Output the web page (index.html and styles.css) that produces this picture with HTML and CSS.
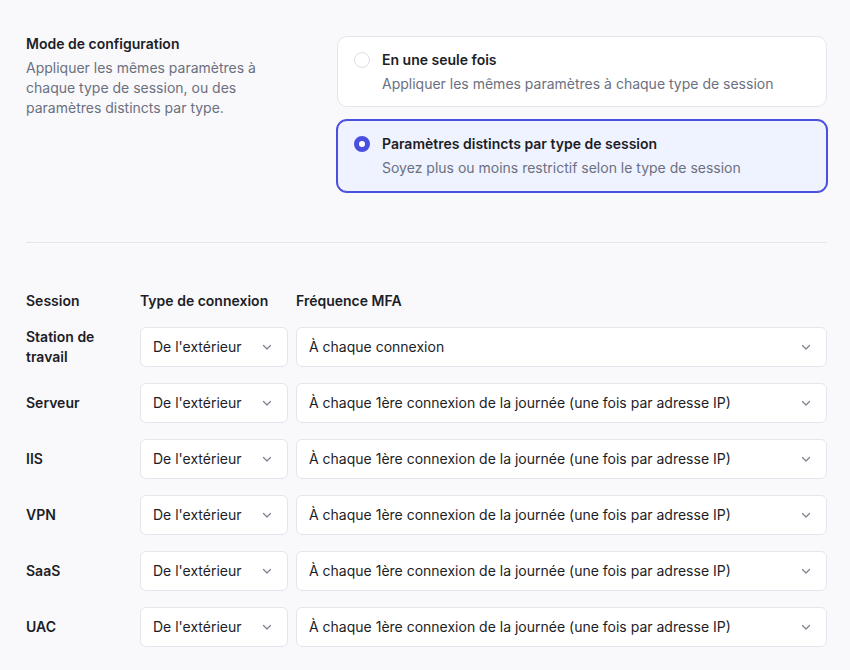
FILE: index.html
```html
<!DOCTYPE html>
<html lang="fr">
<head>
<meta charset="utf-8">
<link rel="stylesheet" href="styles.css">
</head>
<body>
<div class="page">
  <section class="mode">
    <div class="mode-info">
      <div class="mode-title">Mode de configuration</div>
      <p class="mode-desc">Appliquer les mêmes paramètres à chaque type de session, ou des paramètres distincts par type.</p>
    </div>
    <div class="options">
      <label class="option">
        <span class="radio"></span>
        <span class="option-text">
          <span class="option-title">En une seule fois</span>
          <span class="option-desc">Appliquer les mêmes paramètres à chaque type de session</span>
        </span>
      </label>
      <label class="option selected">
        <span class="radio checked"></span>
        <span class="option-text">
          <span class="option-title">Paramètres distincts par type de session</span>
          <span class="option-desc">Soyez plus ou moins restrictif selon le type de session</span>
        </span>
      </label>
    </div>
  </section>
  <hr class="divider">
  <div class="table">
    <div class="th">Session</div>
    <div class="th">Type de connexion</div>
    <div class="th">Fréquence MFA</div>

    <div class="label">Station de travail</div>
    <div class="select"><span>De l'extérieur</span><svg class="chev" viewBox="0 0 12 12"><path d="M2.5 4.5 6 8l3.5-3.5"/></svg></div>
    <div class="select"><span>À chaque connexion</span><svg class="chev" viewBox="0 0 12 12"><path d="M2.5 4.5 6 8l3.5-3.5"/></svg></div>

    <div class="label">Serveur</div>
    <div class="select"><span>De l'extérieur</span><svg class="chev" viewBox="0 0 12 12"><path d="M2.5 4.5 6 8l3.5-3.5"/></svg></div>
    <div class="select"><span>À chaque 1ère connexion de la journée (une fois par adresse IP)</span><svg class="chev" viewBox="0 0 12 12"><path d="M2.5 4.5 6 8l3.5-3.5"/></svg></div>

    <div class="label">IIS</div>
    <div class="select"><span>De l'extérieur</span><svg class="chev" viewBox="0 0 12 12"><path d="M2.5 4.5 6 8l3.5-3.5"/></svg></div>
    <div class="select"><span>À chaque 1ère connexion de la journée (une fois par adresse IP)</span><svg class="chev" viewBox="0 0 12 12"><path d="M2.5 4.5 6 8l3.5-3.5"/></svg></div>

    <div class="label">VPN</div>
    <div class="select"><span>De l'extérieur</span><svg class="chev" viewBox="0 0 12 12"><path d="M2.5 4.5 6 8l3.5-3.5"/></svg></div>
    <div class="select"><span>À chaque 1ère connexion de la journée (une fois par adresse IP)</span><svg class="chev" viewBox="0 0 12 12"><path d="M2.5 4.5 6 8l3.5-3.5"/></svg></div>

    <div class="label">SaaS</div>
    <div class="select"><span>De l'extérieur</span><svg class="chev" viewBox="0 0 12 12"><path d="M2.5 4.5 6 8l3.5-3.5"/></svg></div>
    <div class="select"><span>À chaque 1ère connexion de la journée (une fois par adresse IP)</span><svg class="chev" viewBox="0 0 12 12"><path d="M2.5 4.5 6 8l3.5-3.5"/></svg></div>

    <div class="label">UAC</div>
    <div class="select"><span>De l'extérieur</span><svg class="chev" viewBox="0 0 12 12"><path d="M2.5 4.5 6 8l3.5-3.5"/></svg></div>
    <div class="select"><span>À chaque 1ère connexion de la journée (une fois par adresse IP)</span><svg class="chev" viewBox="0 0 12 12"><path d="M2.5 4.5 6 8l3.5-3.5"/></svg></div>
  </div>
</div>
</body>
</html>
```
FILE: styles.css
```css
* { box-sizing: border-box; }
html, body { margin: 0; padding: 0; }
body {
  background: #f9f9fb;
  font-family: Inter, "Noto Sans", sans-serif;
  font-size: 14px;
  line-height: 20px;
  color: #1c1d26;
}
.page {
  padding: 34px 23px 0 26px;
}
.mode {
  display: grid;
  grid-template-columns: 1fr 490px;
  column-gap: 41px;
}
.mode-title {
  font-weight: 600;
}
.mode-desc {
  margin: 4px 0 0;
  color: #6b7080;
  max-width: 260px;
}
.options {
  display: flex;
  flex-direction: column;
  gap: 13px;
  padding-top: 2px;
}
.option {
  display: flex;
  align-items: flex-start;
  gap: 12px;
  background: #fff;
  border: 1px solid #e5e6ec;
  border-radius: 10px;
  padding: 13px 16px 12px;
}
.option.selected {
  background: #eef3ff;
  border-color: #4b4fe0;
  box-shadow: 0 0 0 1px #4b4fe0;
  padding-bottom: 13px;
}
.radio {
  flex: none;
  width: 16px;
  height: 16px;
  margin-top: 2px;
  border-radius: 50%;
  border: 1px solid #dedfe6;
  background: #fff;
}
.radio.checked {
  border: 5px solid #4b4fe0;
  background: #fff;
}
.option-text {
  display: flex;
  flex-direction: column;
  gap: 4px;
}
.option-title { font-weight: 600; }
.option-desc { color: #6b7080; }
.divider {
  margin: 50px 0 0;
  border: 0;
  border-top: 1px solid #e5e6ec;
}
.table {
  display: grid;
  grid-template-columns: 106px 148px 1fr;
  column-gap: 8px;
  row-gap: 16px;
  margin-top: 48px;
  align-items: center;
}
.th {
  font-weight: 600;
  margin-bottom: 0;
}
.label {
  font-weight: 600;
}
.select {
  height: 40px;
  background: #fff;
  border: 1px solid #e5e6ec;
  border-radius: 6px;
  display: flex;
  align-items: center;
  justify-content: space-between;
  padding: 0 14px 0 12px;
  white-space: nowrap;
}
.chev {
  width: 12px;
  height: 12px;
  fill: none;
  stroke: #7b7f8c;
  stroke-width: 1.2;
  stroke-linecap: round;
  stroke-linejoin: round;
}
```
